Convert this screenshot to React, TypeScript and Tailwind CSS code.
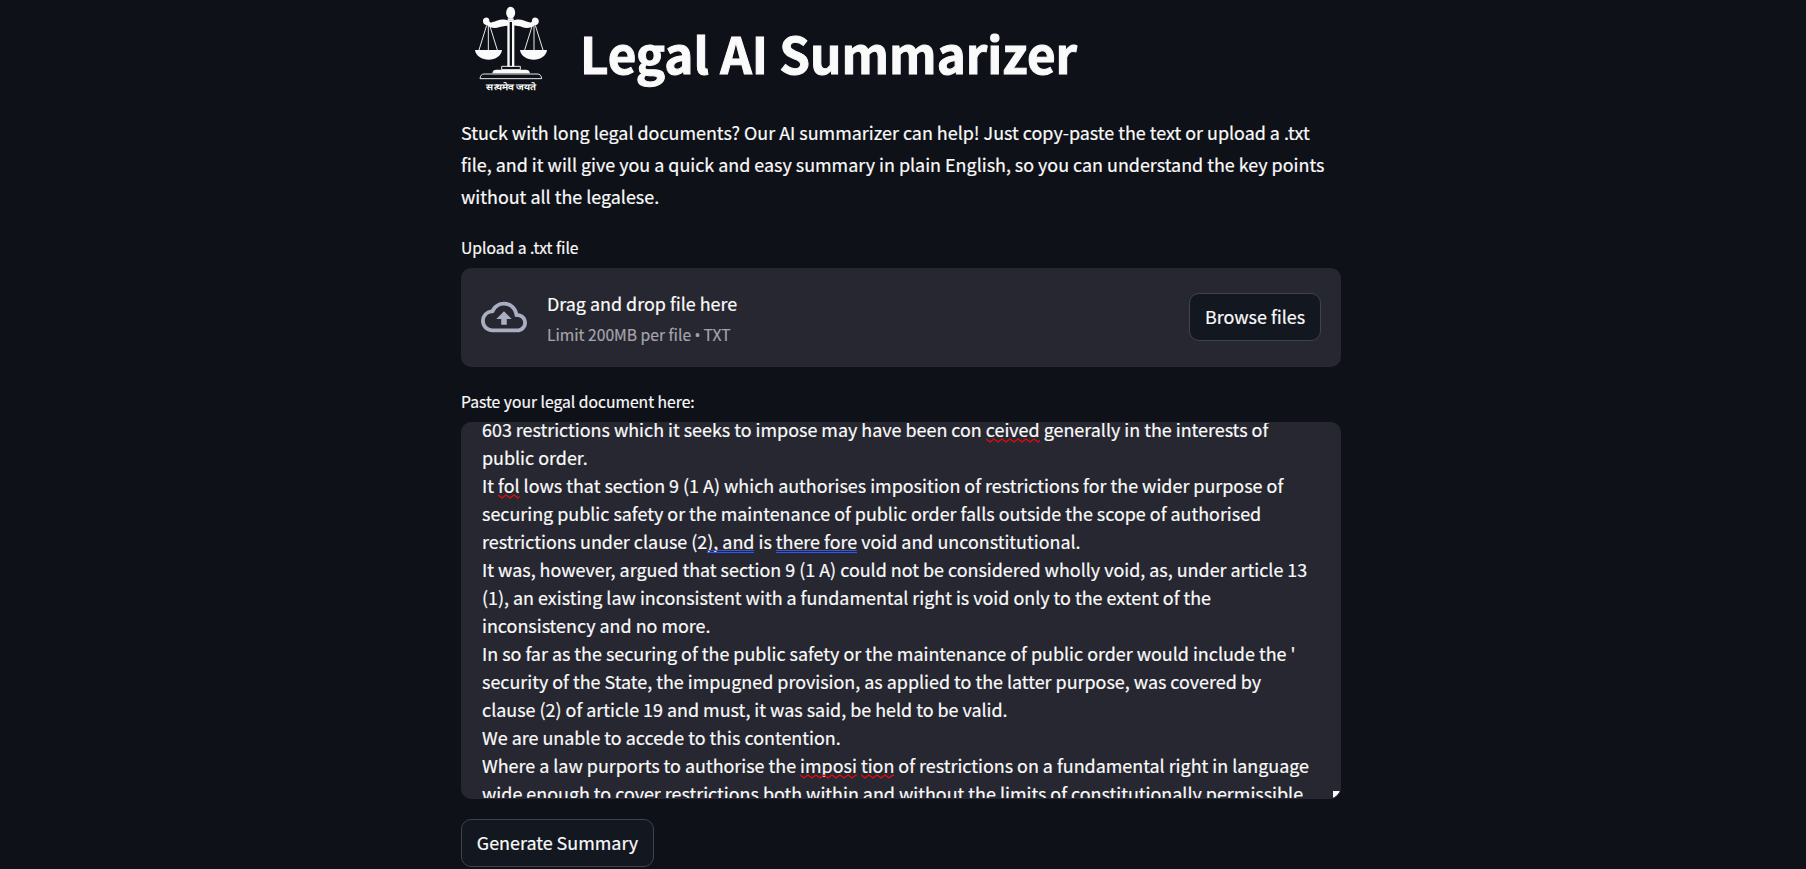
import type { ReactNode } from "react";

function Logo() {
  return (
    <svg viewBox="33 0 300 300" className="block h-[100px] w-[100px]" fill="#fafafa">
      <ellipse cx="182" cy="38" rx="13.5" ry="18" />
      <path d="M173 55h18v7h-18z" />
      <path d="M99 61c2-12 19-11 19 0 0 6 2 8 8 6 14-5 26-11 40-8 10 3 22 3 32 0 14-3 26 3 40 8 6 2 8 0 8-6 0-11 17-12 20 0 2 9-4 14-12 15-8 8-26 10-38 5-14-6-42-6-67 0-12 5-30 3-38-5-8-1-13-6-12-15z" />
      <path d="M172 64h21v136h-21z" />
      <path d="M179 66h7v132h-7z" fill="#0e1117" />
      <g fill="none" stroke="#fafafa" strokeWidth="2.8">
        <path d="M110 76L87 150M115 76V150M119 76L142 150M247 76L224 150M252 76V150M256 76L279 150" />
        <path d="M155 199h56v10h-56z" />
        <path d="M90 236c1-9 5-14 12-14h160c8 0 12 5 13 14z" />
      </g>
      <path d="M75 150h81c-2 18-20 29-40 29s-39-11-41-29z" />
      <path d="M210 150h81c-2 18-20 29-40 29s-39-11-41-29z" />
      <path d="M127 220c1-8 5-11 12-11h88c7 0 12 3 13 11z" />
      <text x="109" y="271" fontSize="26" fontWeight="600" textLength="148" lengthAdjust="spacingAndGlyphs">
        सत्यमेव जयते
      </text>
    </svg>
  );
}

function Misspelt({ children }: { children: ReactNode }) {
  return (
    <span className="relative inline-block">
      {children}
      <svg className="absolute left-0 top-[23px] h-[5px] w-full">
        <defs>
          <pattern id="wave" width="8" height="5" patternUnits="userSpaceOnUse">
            <path d="M-1 0L0 1L4 4L8 1L9 0" fill="none" stroke="#e30b0b" strokeWidth="1.3" />
          </pattern>
        </defs>
        <rect width="100%" height="5" fill="url(#wave)" />
      </svg>
    </span>
  );
}

function Grammar({ children }: { children: ReactNode }) {
  return (
    <span className="relative inline-block">
      {children}
      <span className="absolute left-0 top-[23px] h-[3px] w-full border-y border-[#3457e8]" />
    </span>
  );
}

const lines: ReactNode[] = [
  <>603 restrictions which it seeks to impose may have been con <Misspelt>ceived</Misspelt> generally in the interests of</>,
  <>public order.</>,
  <>It <Misspelt>fol</Misspelt> lows that section 9 (1 A) which authorises imposition of restrictions for the wider purpose of</>,
  <>securing public safety or the maintenance of public order falls outside the scope of authorised</>,
  <>restrictions under clause (2<Grammar>), and</Grammar> is <Grammar>there fore</Grammar> void and unconstitutional.</>,
  <>It was, however, argued that section 9 (1 A) could not be considered wholly void, as, under article 13</>,
  <>(1), an existing law inconsistent with a fundamental right is void only to the extent of the</>,
  <>inconsistency and no more.</>,
  <>In so far as the securing of the public safety or the maintenance of public order would include the '</>,
  <>security of the State, the impugned provision, as applied to the latter purpose, was covered by</>,
  <>clause (2) of article 19 and must, it was said, be held to be valid.</>,
  <>We are unable to accede to this contention.</>,
  <>Where a law purports to authorise the <Misspelt>imposi</Misspelt> <Misspelt>tion</Misspelt> of restrictions on a fundamental right in language</>,
  <>wide enough to cover restrictions both within and without the limits of constitutionally permissible</>,
];

export default function App() {
  return (
    <main className="h-[869px] overflow-hidden bg-[#0e1117] font-['Noto_Sans_CJK_SC',sans-serif] text-[17.915px] text-[#fafafa] [-webkit-text-stroke:0.2px]">
      <div className="ml-[461px] flex w-[880px] flex-col whitespace-nowrap">
        <header className="flex h-[116px] items-start">
          <Logo />
          <h1 className="ml-[19px] mt-[18px] text-[49.35px] font-bold leading-[70px] [-webkit-text-stroke:1px]">Legal AI Summarizer</h1>
        </header>
        <p className="leading-8">
          Stuck with long legal documents? Our AI summarizer can help! Just copy-paste the text or upload a .txt
          <br />
          file, and it will give you a quick and easy summary in plain English, so you can understand the key points
          <br />
          without all the legalese.
        </p>
        <label className="mt-[22px] text-[15.66px] leading-7">Upload a .txt file</label>
        <section className="mt-[6px] flex h-[99px] items-center rounded-[10px] bg-[#262730] px-5">
          <svg viewBox="0 0 24 24" className="mb-[1px] size-[46px]" fill="#a9aec1">
            <path d="M19.35 10.04A7.49 7.49 0 0 0 12 4C9.11 4 6.6 5.64 5.35 8.04A5.994 5.994 0 0 0 0 14c0 3.31 2.69 6 6 6h13c2.76 0 5-2.24 5-5 0-2.64-2.05-4.78-4.65-4.96zM19 18H6c-2.21 0-4-1.79-4-4 0-2.05 1.53-3.76 3.56-3.97l1.07-.11.5-.95A5.469 5.469 0 0 1 12 6c2.62 0 4.88 1.86 5.39 4.43l.3 1.5 1.53.11A2.98 2.98 0 0 1 22 15c0 1.65-1.35 3-3 3zM8 13h2.55v3h2.9v-3H16l-4-4z" />
          </svg>
          <div className="ml-5 flex grow flex-col">
            <span className="leading-8">Drag and drop file here</span>
            <small className="mt-[2px] text-[15.66px] leading-7 text-[#a5a5a9]">
              Limit 200MB per file <span className="inline-block w-[5.5px] text-center font-['Open_Sans',sans-serif] leading-4">•</span> TXT
            </small>
          </div>
          <button className="mb-[1px] h-12 w-[132px] rounded-[10px] border border-[#41434b] bg-[#131720] pb-[2px] leading-8">Browse files</button>
        </section>
        <label className="mt-[21px] text-[15.66px] leading-7">Paste your legal document here:</label>
        <div className="relative mt-[6px] h-[377px] overflow-hidden rounded-[10px] border border-[#262730] bg-[#262730] pl-5">
          <div className="-mt-[8px] leading-7">
            {lines.map((line, i) => (
              <div key={i}>{line}</div>
            ))}
          </div>
          <svg className="absolute bottom-0 right-0 h-[7px] w-[7px]" fill="#fafafa">
            <path d="M0 0h7v1L1 7H0z" />
            <path d="M7 2v5H2z" fill="#55565d" />
          </svg>
        </div>
        <button className="mt-5 h-12 w-[193px] rounded-[10px] border border-[#41434b] bg-[#131720] pb-[2px] leading-8">Generate Summary</button>
      </div>
    </main>
  );
}
